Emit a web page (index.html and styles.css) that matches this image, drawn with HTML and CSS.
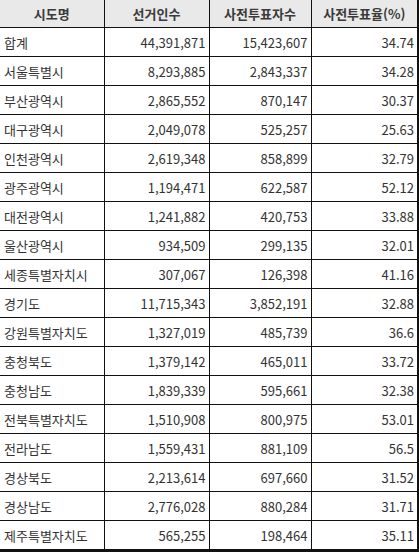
FILE: index.html
```html
<!DOCTYPE html>
<html lang="ko">
<head>
<meta charset="utf-8">
<link rel="stylesheet" href="styles.css">
</head>
<body>
<table class="vote-table">
  <colgroup>
    <col class="c1"><col class="c2"><col class="c3"><col class="c4">
  </colgroup>
  <thead>
    <tr><th>시도명</th><th>선거인수</th><th>사전투표자수</th><th>사전투표율(%)</th></tr>
  </thead>
  <tbody>
    <tr><td>합계</td><td>44,391,871</td><td>15,423,607</td><td>34.74</td></tr>
    <tr><td>서울특별시</td><td>8,293,885</td><td>2,843,337</td><td>34.28</td></tr>
    <tr><td>부산광역시</td><td>2,865,552</td><td>870,147</td><td>30.37</td></tr>
    <tr><td>대구광역시</td><td>2,049,078</td><td>525,257</td><td>25.63</td></tr>
    <tr><td>인천광역시</td><td>2,619,348</td><td>858,899</td><td>32.79</td></tr>
    <tr><td>광주광역시</td><td>1,194,471</td><td>622,587</td><td>52.12</td></tr>
    <tr><td>대전광역시</td><td>1,241,882</td><td>420,753</td><td>33.88</td></tr>
    <tr><td>울산광역시</td><td>934,509</td><td>299,135</td><td>32.01</td></tr>
    <tr><td>세종특별자치시</td><td>307,067</td><td>126,398</td><td>41.16</td></tr>
    <tr><td>경기도</td><td>11,715,343</td><td>3,852,191</td><td>32.88</td></tr>
    <tr><td>강원특별자치도</td><td>1,327,019</td><td>485,739</td><td>36.6</td></tr>
    <tr><td>충청북도</td><td>1,379,142</td><td>465,011</td><td>33.72</td></tr>
    <tr><td>충청남도</td><td>1,839,339</td><td>595,661</td><td>32.38</td></tr>
    <tr><td>전북특별자치도</td><td>1,510,908</td><td>800,975</td><td>53.01</td></tr>
    <tr><td>전라남도</td><td>1,559,431</td><td>881,109</td><td>56.5</td></tr>
    <tr><td>경상북도</td><td>2,213,614</td><td>697,660</td><td>31.52</td></tr>
    <tr><td>경상남도</td><td>2,776,028</td><td>880,284</td><td>31.71</td></tr>
    <tr><td>제주특별자치도</td><td>565,255</td><td>198,464</td><td>35.11</td></tr>
  </tbody>
</table>
</body>
</html>
```
FILE: styles.css
```css
html, body {
  margin: 0;
  padding: 0;
  background: #ffffff;
}
.vote-table {
  border-collapse: collapse;
  table-layout: fixed;
  width: 418px;
  font-family: "Noto Sans CJK KR", "Noto Sans", sans-serif;
  font-size: 13px;
  color: #333333;
}
.c1 { width: 104px; }
.c2 { width: 105px; }
.c3 { width: 102px; }
.c4 { width: 107px; }
.vote-table th {
  height: 27px;
  padding: 0;
  background: #e9e9e9;
  color: #3a3a3a;
  font-weight: bold;
  text-align: center;
  border-left: 1px solid #111;
  border-bottom: 1px solid #111;
}
.vote-table th:first-child { border-left: none; }
.vote-table th:last-child, .vote-table td:last-child { border-right: 2px solid #111; }
.vote-table td {
  height: 28px;
  padding: 0 3px 0 4px;
  text-align: right;
  border-left: 1px solid #111;
  border-bottom: 1px solid #111;
  line-height: 1;
}
.vote-table td:first-child {
  text-align: left;
  border-left: none;
}
.vote-table tbody tr:last-child td { border-bottom: 3px solid #111; }
```
